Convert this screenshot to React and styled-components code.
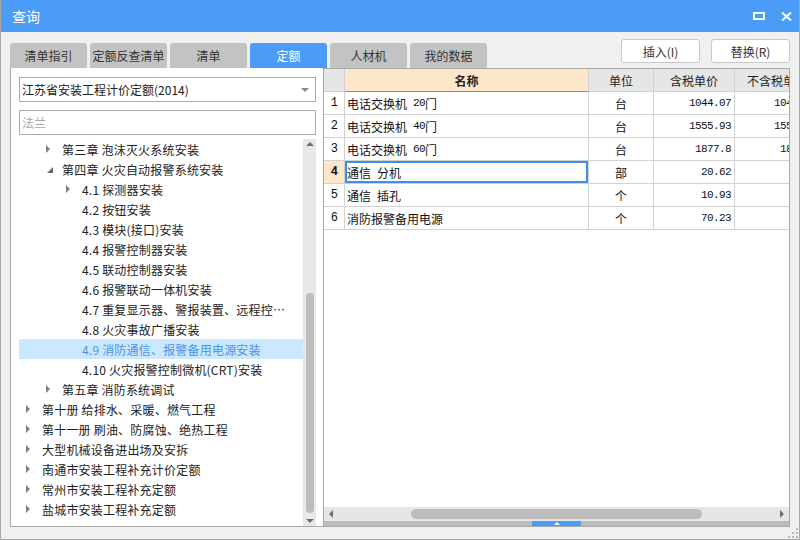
import React from 'react';
import styled, { createGlobalStyle } from 'styled-components';

const Global = createGlobalStyle`
  html, body { margin: 0; padding: 0; background: #fff; }
  body { font-family: "Noto Sans CJK SC", "Microsoft YaHei", sans-serif; font-size: 12px; color: #222; }
  * { box-sizing: border-box; }
`;

const BLUE = '#4a9cf7';

const Window = styled.div`
  width: 800px;
  height: 540px;
  display: flex;
  flex-direction: column;
  background: #f0f0f0;
  border: 1px solid #a8a8a8;
  border-top: none;
  overflow: hidden;
`;

const TitleBar = styled.div`
  height: 32px;
  flex: none;
  background: ${BLUE};
  display: flex;
  align-items: center;
  padding: 0 7px 0 11px;
  color: #fff;
`;

const Title = styled.div`
  font-size: 14px;
  flex: 1;
`;

const TitleBtn = styled.div`
  display: flex;
  align-items: center;
  justify-content: center;
  margin-left: ${p => p.$gap || 0}px;
`;

const TopRow = styled.div`
  height: 36px;
  flex: none;
  display: flex;
  align-items: flex-end;
  padding: 0 9px;
`;

const Tabs = styled.div`
  display: flex;
  gap: 3px;
  flex: 1;
`;

const Tab = styled.div`
  width: 77px;
  height: 25px;
  border-radius: 3px 3px 0 0;
  background: ${p => (p.$active ? BLUE : '#c3c3c3')};
  color: ${p => (p.$active ? '#fff' : '#333')};
  display: flex;
  align-items: center;
  justify-content: center;
  font-size: 12px;
`;

const Buttons = styled.div`
  align-self: flex-start;
  margin-top: 7px;
  display: flex;
  gap: 11px;
`;

const Button = styled.div`
  width: 79px;
  height: 24px;
  background: #fff;
  border: 1px solid #c8c8c8;
  border-radius: 3px;
  display: flex;
  align-items: center;
  justify-content: center;
  color: #333;
  font-size: 12px;
`;

const Main = styled.div`
  height: 459px;
  flex: none;
  margin-left: 9px;
  width: 780px;
  display: flex;
  border-bottom: 1px solid #a8a8a8;
`;

const LeftPanel = styled.div`
  width: 314px;
  flex: none;
  background: #fff;
  border-left: 1px solid #a8a8a8;
  border-right: 1px solid #a8a8a8;
  padding: 9px 7px 0 8px;
  display: flex;
  flex-direction: column;
`;

const Field = styled.div`
  height: 25px;
  flex: none;
  border: 1px solid #ababab;
  display: flex;
  align-items: center;
  padding: 0 2px;
  color: ${p => (p.$placeholder ? '#a8a8a8' : '#222')};
  font-size: 12px;
  & + & { margin-top: 8px; }
`;

const FieldText = styled.span`
  flex: 1;
`;

const TreeArea = styled.div`
  margin-top: 4px;
  flex: 1;
  display: flex;
  min-height: 0;
`;

const TreeList = styled.div`
  flex: 1;
  overflow: hidden;
`;

const TreeRow = styled.div`
  height: 20px;
  display: flex;
  align-items: center;
  padding-left: ${p => 7 + p.$level * 20}px;
  background: ${p => (p.$selected ? '#cce8ff' : 'transparent')};
  color: ${p => (p.$selected ? '#4b93e6' : '#222')};
  white-space: nowrap;
  font-size: 12px;
`;

const ArrowBox = styled.span`
  width: 16px;
  flex: none;
  display: flex;
  align-items: center;
`;

const TreeText = styled.span`
  overflow: hidden;
  text-overflow: ellipsis;
  padding-right: 6px;
  letter-spacing: 0.2px;
`;

const VScroll = styled.div`
  width: 13px;
  flex: none;
  background: #e8e8e8;
  position: relative;
`;

const VThumb = styled.div`
  position: absolute;
  left: 3px;
  width: 8px;
  top: ${p => p.$top}px;
  height: ${p => p.$h}px;
  background: #bcbcbc;
  border-radius: 4px;
`;

const ScrollArrow = styled.div`
  position: absolute;
  ${p => p.$pos};
  display: flex;
`;

const RightPanel = styled.div`
  flex: 1;
  display: flex;
  flex-direction: column;
  border-top: 1px solid #a8a8a8;
  border-right: 1px solid #a8a8a8;
  background: #fff;
  min-width: 0;
`;

const GridArea = styled.div`
  flex: 1;
  overflow: hidden;
`;

const Grid = styled.div`
  display: grid;
  grid-template-columns: 21px 244px 65px 81px 85px;
  grid-auto-rows: 23px;
`;

const Cell = styled.div`
  border-right: 1px solid #d2d2d2;
  border-bottom: 1px solid #d2d2d2;
  display: flex;
  align-items: center;
  justify-content: ${p => p.$align || 'flex-start'};
  padding: ${p => (p.$align === 'flex-end' ? '0 3px 0 0' : '0 2px')};
  font-size: 12px;
  color: #111;
  white-space: pre;
  overflow: hidden;
`;

const HeadCell = styled(Cell)`
  background: ${p => (p.$peach ? '#fde7cb' : '#e6e6e6')};
  border-bottom: 1px solid ${p => (p.$peach ? BLUE : '#d2d2d2')};
  font-weight: ${p => (p.$peach ? 700 : 400)};
  justify-content: ${p => (p.$left ? 'flex-start' : 'center')};
  padding-left: ${p => (p.$left ? '12px' : '2px')};
  color: #222;
`;

const NumCell = styled(Cell)`
  justify-content: center;
  font-family: "Liberation Mono", monospace;
  font-size: 12px;
  letter-spacing: -0.6px;
  background: ${p => (p.$current ? '#fde7cb' : '#fff')};
  font-weight: ${p => (p.$current ? 700 : 400)};
`;

const NameCell = styled(Cell)`
  box-shadow: ${p => (p.$focus ? 'inset 0 0 0 2px #3f8fe8' : 'none')};
`;

const Mono = styled.span`
  font-family: "Liberation Mono", monospace;
  font-size: 11px;
  letter-spacing: -0.6px;
`;

const HScroll = styled.div`
  height: 14px;
  flex: none;
  background: #e6e6e6;
  position: relative;
`;

const HThumb = styled.div`
  position: absolute;
  top: 2px;
  height: 10px;
  left: ${p => p.$left}px;
  width: ${p => p.$w}px;
  background: #bcbcbc;
  border-radius: 5px;
`;

const Splitter = styled.div`
  height: 5px;
  flex: none;
  background: #bcbcbc;
  display: flex;
  justify-content: center;
`;

const SplitHandle = styled.div`
  width: 49px;
  height: 5px;
  background: ${BLUE};
  display: flex;
  align-items: center;
  justify-content: center;
`;

const Bottom = styled.div`
  flex: 1;
  display: flex;
  justify-content: flex-end;
  align-items: flex-end;
  padding: 0 1px 1px 0;
`;

const Tri = ({ dir, color = '#7a7a7a', size = 4 }) => {
  const s = size;
  let pts;
  if (dir === 'right') pts = `0,0 ${s},${s} 0,${2 * s}`;
  else if (dir === 'left') pts = `${s},0 0,${s} ${s},${2 * s}`;
  else if (dir === 'up') pts = `0,${s} ${s},0 ${2 * s},${s}`;
  else pts = `0,0 ${2 * s},0 ${s},${s}`;
  const w = dir === 'right' || dir === 'left' ? s : 2 * s;
  const h = dir === 'right' || dir === 'left' ? 2 * s : s;
  return (
    <svg width={w} height={h} viewBox={`0 0 ${w} ${h}`}>
      <polygon points={pts} fill={color} />
    </svg>
  );
};

const Expanded = () => (
  <svg width="6" height="6" viewBox="0 0 6 6" style={{ marginLeft: 1, marginTop: 1 }}>
    <polygon points="6,0 6,6 0,6" fill="#6a6a6a" />
  </svg>
);

const tree = [
  { level: 1, text: '第三章 泡沫灭火系统安装', arrow: 'c' },
  { level: 1, text: '第四章 火灾自动报警系统安装', arrow: 'e' },
  { level: 2, text: '4.1 探测器安装', arrow: 'c' },
  { level: 2, text: '4.2 按钮安装' },
  { level: 2, text: '4.3 模块(接口)安装' },
  { level: 2, text: '4.4 报警控制器安装' },
  { level: 2, text: '4.5 联动控制器安装' },
  { level: 2, text: '4.6 报警联动一体机安装' },
  { level: 2, text: '4.7 重复显示器、警报装置、远程控制器安装' },
  { level: 2, text: '4.8 火灾事故广播安装' },
  { level: 2, text: '4.9 消防通信、报警备用电源安装', selected: true },
  { level: 2, text: '4.10 火灾报警控制微机(CRT)安装' },
  { level: 1, text: '第五章 消防系统调试', arrow: 'c' },
  { level: 0, text: '第十册 给排水、采暖、燃气工程', arrow: 'c' },
  { level: 0, text: '第十一册 刷油、防腐蚀、绝热工程', arrow: 'c' },
  { level: 0, text: '大型机械设备进出场及安拆', arrow: 'c' },
  { level: 0, text: '南通市安装工程补充计价定额', arrow: 'c' },
  { level: 0, text: '常州市安装工程补充定额', arrow: 'c' },
  { level: 0, text: '盐城市安装工程补充定额', arrow: 'c' },
];

const rows = [
  { parts: ['电话交换机', ' 20', '门'], unit: '台', price: '1044.07', net: '1044.07' },
  { parts: ['电话交换机', ' 40', '门'], unit: '台', price: '1555.93', net: '1555.93' },
  { parts: ['电话交换机', ' 60', '门'], unit: '台', price: '1877.8', net: '1877.8' },
  { parts: ['通信', ' ', '分机'], unit: '部', price: '20.62', net: '' },
  { parts: ['通信', ' ', '插孔'], unit: '个', price: '10.93', net: '' },
  { parts: ['消防报警备用电源'], unit: '个', price: '70.23', net: '' },
];

const tabs = ['清单指引', '定额反查清单', '清单', '定额', '人材机', '我的数据'];

export default function App() {
  return (
    <>
      <Global />
      <Window>
        <TitleBar>
          <Title>查询</Title>
          <TitleBtn>
            <svg width="12" height="8" viewBox="0 0 12 8">
              <rect x="1" y="1" width="10" height="6" fill="none" stroke="#fff" strokeWidth="2" />
            </svg>
          </TitleBtn>
          <TitleBtn $gap={16}>
            <svg width="11" height="9" viewBox="0 0 11 9">
              <path d="M1 0.5 L10 8.5 M10 0.5 L1 8.5" stroke="#fff" strokeWidth="2" />
            </svg>
          </TitleBtn>
        </TitleBar>
        <TopRow>
          <Tabs>
            {tabs.map(t => (
              <Tab key={t} $active={t === '定额'}>{t}</Tab>
            ))}
          </Tabs>
          <Buttons>
            <Button>插入(I)</Button>
            <Button>替换(R)</Button>
          </Buttons>
        </TopRow>
        <Main>
          <LeftPanel>
            <Field>
              <FieldText>江苏省安装工程计价定额(2014)</FieldText>
              <Tri dir="down" size={4} color="#888" />
              <span style={{ width: 4 }} />
            </Field>
            <Field $placeholder>法兰</Field>
            <TreeArea>
              <TreeList>
                {tree.map((n, i) => (
                  <TreeRow key={i} $level={n.level} $selected={n.selected}>
                    <ArrowBox>
                      {n.arrow === 'c' && <Tri dir="right" size={4} color="#808080" />}
                      {n.arrow === 'e' && <Expanded />}
                    </ArrowBox>
                    <TreeText>{n.text}</TreeText>
                  </TreeRow>
                ))}
              </TreeList>
              <VScroll>
                <ScrollArrow $pos="top: 3px; left: 3px;">
                  <Tri dir="up" size={4} color="#6e6e6e" />
                </ScrollArrow>
                <VThumb $top={154} $h={220} />
                <ScrollArrow $pos="bottom: 3px; left: 3px;">
                  <Tri dir="down" size={4} color="#6e6e6e" />
                </ScrollArrow>
              </VScroll>
            </TreeArea>
          </LeftPanel>
          <RightPanel>
            <GridArea>
              <Grid>
                <HeadCell />
                <HeadCell $peach>名称</HeadCell>
                <HeadCell>单位</HeadCell>
                <HeadCell>含税单价</HeadCell>
                <HeadCell $left>不含税单价</HeadCell>
                {rows.map((r, i) => (
                  <React.Fragment key={i}>
                    <NumCell $current={i === 3}>{i + 1}</NumCell>
                    <NameCell $focus={i === 3}>
                      {r.parts.map((p, k) =>
                        k === 1 ? <Mono key={k}>{p}</Mono> : <span key={k}>{p}</span>
                      )}
                    </NameCell>
                    <Cell $align="center">{r.unit}</Cell>
                    <Cell $align="flex-end"><Mono>{r.price}</Mono></Cell>
                    <Cell $align="flex-end"><Mono>{r.net}</Mono></Cell>
                  </React.Fragment>
                ))}
              </Grid>
            </GridArea>
            <HScroll>
              <ScrollArrow $pos="left: 5px; top: 3px;">
                <Tri dir="left" size={4} color="#6e6e6e" />
              </ScrollArrow>
              <HThumb $left={87} $w={291} />
              <ScrollArrow $pos="right: 5px; top: 3px;">
                <Tri dir="right" size={4} color="#6e6e6e" />
              </ScrollArrow>
            </HScroll>
            <Splitter>
              <SplitHandle>
                <Tri dir="up" size={3} color="#fff" />
              </SplitHandle>
            </Splitter>
          </RightPanel>
        </Main>
        <Bottom>
          <svg width="10" height="10" viewBox="0 0 10 10">
            <rect x="8" y="0" width="2" height="2" fill="#bbb" />
            <rect x="4" y="4" width="2" height="2" fill="#bbb" />
            <rect x="8" y="4" width="2" height="2" fill="#bbb" />
            <rect x="0" y="8" width="2" height="2" fill="#bbb" />
            <rect x="4" y="8" width="2" height="2" fill="#bbb" />
            <rect x="8" y="8" width="2" height="2" fill="#bbb" />
          </svg>
        </Bottom>
      </Window>
    </>
  );
}
